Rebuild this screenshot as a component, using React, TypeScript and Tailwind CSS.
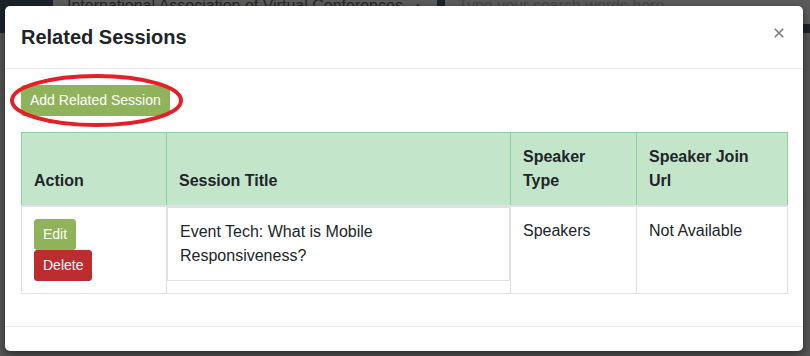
import React from "react";

export default function App() {
  return (
    <div className="relative w-[810px] h-[356px] overflow-hidden bg-[#545454] font-['Liberation_Sans',Arial,sans-serif]">
      {/* page behind the overlay */}
      <div className="flex h-[33px] bg-[#1c232b]">
        <div className="w-[53px]" />
        <div className="relative w-[384px] h-[24px] bg-[#5b5b5b] overflow-hidden">
          <div className="absolute left-[14px] top-[-2px] flex items-center text-[16px] leading-[16px] text-[#262626] whitespace-nowrap">
            International Association of Virtual Conferences
            <span className="ml-[10px] text-[10px]">▲</span>
          </div>
        </div>
        <div className="w-[8px]" />
        <div className="relative flex-1 h-[24px] bg-[#5b5b5b] overflow-hidden">
          <div className="absolute left-[13px] top-[-2px] text-[16px] leading-[16px] text-[#474747] whitespace-nowrap">
            Type your search words here
          </div>
        </div>
      </div>

      {/* modal */}
      <div className="absolute left-[5px] top-[6px] w-[798px] h-[345px] bg-white rounded-[5px] shadow-[0_3px_9px_rgba(0,0,0,0.5)] flex flex-col">
        <div className="h-[63px] px-[16px] flex items-center justify-between border-b border-[#e9ecef]">
          <h5 className="text-[20px] font-bold leading-[30px] text-[#212529]">Related Sessions</h5>
          <svg width="10" height="10" viewBox="0 0 10 10" className="mr-[3px] mt-[-8px]">
            <path d="M0.8 0.8 L9.2 9.2 M9.2 0.8 L0.8 9.2" stroke="#7a7a7a" strokeWidth="1.6" />
          </svg>
        </div>
        <div className="px-[16px] pt-[16px] pb-[16px]">
          <button className="block h-[31px] px-[8px] border border-[#8fb35b] bg-[#8fb35b] rounded-[3px] text-[14px] leading-[21px] text-white">
            Add Related Session
          </button>
          <table className="mt-[16px] mb-[16px] w-[766px] table-fixed border-collapse text-[16px] leading-[24px] text-[#212529]">
            <colgroup>
              <col className="w-[145px]" />
              <col className="w-[344px]" />
              <col className="w-[126px]" />
              <col className="w-[151px]" />
            </colgroup>
            <thead>
              <tr className="bg-[#c3e6cb]">
                <th className="border border-[#8fd19e] border-b-2 border-b-[#dee2e6] p-[12px] align-bottom text-left font-bold">Action</th>
                <th className="border border-[#8fd19e] border-b-2 border-b-[#dee2e6] p-[12px] align-bottom text-left font-bold">Session Title</th>
                <th className="border border-[#8fd19e] border-b-2 border-b-[#dee2e6] p-[12px] align-bottom text-left font-bold">Speaker Type</th>
                <th className="border border-[#8fd19e] border-b-2 border-b-[#dee2e6] p-[12px] align-bottom text-left font-bold">Speaker Join Url</th>
              </tr>
            </thead>
            <tbody>
              <tr>
                <td className="border border-[#dee2e6] p-[12px] align-top">
                  <div className="flex flex-col items-start">
                    <button className="h-[31px] px-[8px] border border-[#8fb35b] bg-[#8fb35b] rounded-[3px] text-[14px] leading-[21px] text-white">Edit</button>
                    <button className="h-[31px] px-[8px] border border-[#bd2c2e] bg-[#bd2c2e] rounded-[3px] text-[14px] leading-[21px] text-white">Delete</button>
                  </div>
                </td>
                <td className="border border-[#dee2e6] p-0 align-top">
                  <div className="h-[74px] border border-[#dee2e6] px-[12px] py-[12px]">
                    Event Tech: What is Mobile Responsiveness?
                  </div>
                </td>
                <td className="border border-[#dee2e6] p-[12px] align-top">Speakers</td>
                <td className="border border-[#dee2e6] p-[12px] align-top">Not Available</td>
              </tr>
            </tbody>
          </table>
        </div>
        <div className="flex-1 border-t border-[#e9ecef]" />
      </div>

      {/* red annotation ellipse */}
      <svg className="absolute left-0 top-0 pointer-events-none" width="810" height="356">
        <ellipse cx="96.5" cy="100.5" rx="84.5" ry="24.5" fill="none" stroke="#e61e27" strokeWidth="4" />
      </svg>
    </div>
  );
}
